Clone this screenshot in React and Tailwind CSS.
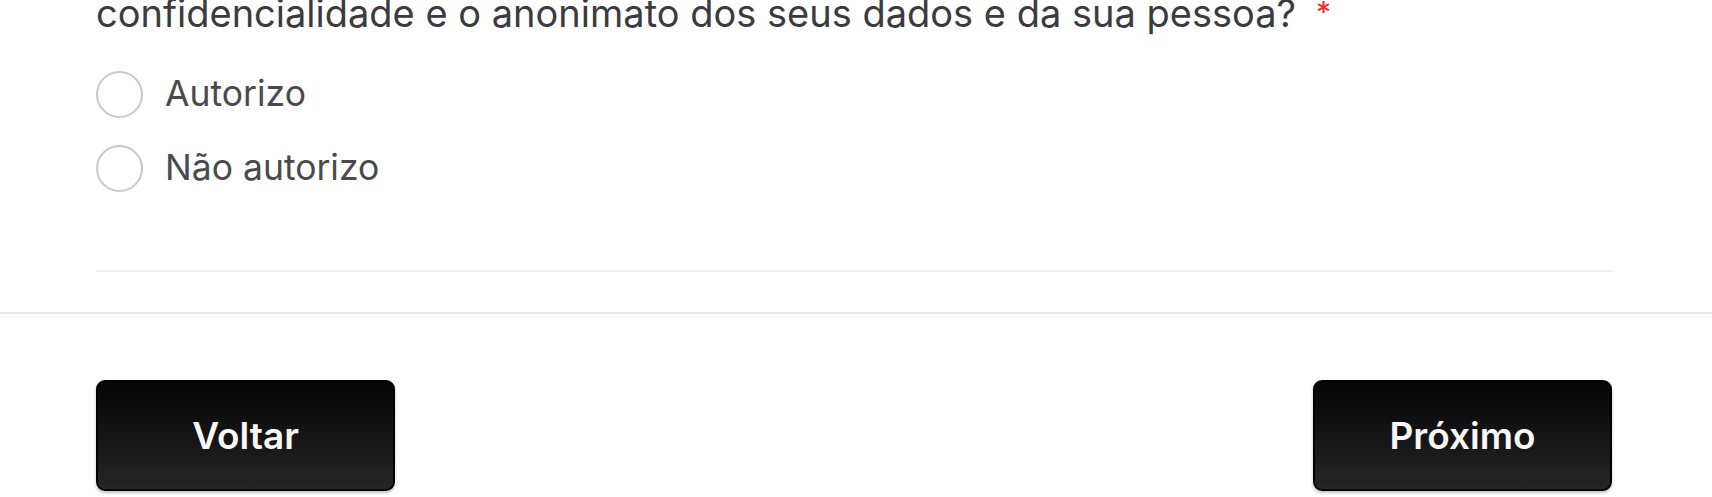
export default function App() {
  const options = ["Autorizo", "Não autorizo"];

  return (
    <div className="w-[1712px] h-[497px] overflow-hidden bg-white" style={{ fontFamily: "Inter, 'Noto Sans', sans-serif" }}>
      <section className="pl-[96px] pr-[100px] pb-[40px]">
        <h2 className="mt-[-12px] text-[38px] leading-[50px] text-[#3b3b3f] whitespace-nowrap">
          confidencialidade e o anonimato dos seus dados e da sua pessoa?
          <span className="ml-[20px] text-[30px] leading-none text-[#ef2b2b] align-[4px]">*</span>
        </h2>

        <div className="mt-[32px] flex flex-col gap-[26px]">
          {options.map((o) => (
            <label key={o} className="flex items-center gap-[22px] h-[48px]">
              <span className="w-[47px] h-[47px] rounded-full border-2 border-[#c8c7d2] bg-white shrink-0" />
              <span className="text-[35.5px] text-[#4a4a4e]">{o}</span>
            </label>
          ))}
        </div>

        <div className="mt-[78px] h-[2px] bg-[#f1f1f3]" />
      </section>

      <div className="h-[2px] bg-[#e7e7ea]" />

      <footer className="pl-[96px] pr-[100px] pt-[66px] flex justify-between">
        {["Voltar", "Próximo"].map((b) => (
          <button
            key={b}
            className="w-[299px] h-[111px] rounded-[9px] border-2 border-black bg-gradient-to-b from-[#060606] to-[#262626] text-[#f7f7f8] text-[37px] font-semibold shadow-[0_2px_3px_rgba(0,0,0,0.25)]"
          >
            {b}
          </button>
        ))}
      </footer>
    </div>
  );
}
